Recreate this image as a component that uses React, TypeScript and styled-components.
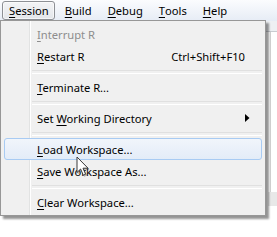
import React from "react";
import styled, { createGlobalStyle } from "styled-components";

const GlobalStyle = createGlobalStyle`
  html, body { margin: 0; padding: 0; background: #ffffff; }
  body { font-family: "Noto Sans", "Open Sans", sans-serif; font-size: 11.2px; color: #000; }
  * { box-sizing: border-box; }
`;

const Screen = styled.div`
  position: relative;
  width: 277px;
  height: 237px;
  overflow: hidden;
  background: #ffffff;
  display: flex;
  flex-direction: column;
`;

const MenuBar = styled.div`
  height: 21px;
  flex: none;
  display: flex;
  align-items: stretch;
  padding: 1px 0 1px 2px;
  background: linear-gradient(#fbfcfe, #e6ecf5);
`;

const MenuTitle = styled.div<{ $open?: boolean }>`
  display: flex;
  align-items: center;
  padding: 0 ${(p) => (p.$open ? "5px 0 6px" : "7px")};
  margin-right: ${(p) => (p.$open ? "2px" : "0")};
  border: 1px solid ${(p) => (p.$open ? "#8d9095" : "transparent")};
  border-radius: 3px;
  background: ${(p) => (p.$open ? "linear-gradient(#f3f4f6, #e3e6ea)" : "transparent")};
  box-shadow: ${(p) => (p.$open ? "inset 0 0 0 1px rgba(255,255,255,0.6)" : "none")};
  line-height: 1;
  white-space: nowrap;
`;

const Key = styled.span`
  text-decoration: underline;
  text-underline-offset: 2px;
  text-decoration-thickness: 1px;
`;

const Backdrop = styled.div`
  flex: 1;
  display: flex;
  flex-direction: column;
`;

const ToolStrip = styled.div`
  height: 11px;
  flex: none;
  background: #eef0f3;
  border-bottom: 1px solid #c9ccd1;
`;

const PaneArea = styled.div`
  flex: 1;
  display: flex;
  flex-direction: column;
  align-items: flex-end;
`;

const PaneEdge = styled.div`
  width: 4px;
  height: 160px;
  margin-right: 3px;
  border-left: 1px solid #d4d4d4;
`;

const PaneBlock = styled.div`
  width: 9px;
  height: 14px;
  background: #e8e8e8;
`;

const Menu = styled.div`
  position: absolute;
  left: 0;
  top: 20px;
  width: 266px;
  padding: 2px;
  border: 1px solid #979797;
  background-color: #f0f0f0;
  background-image: linear-gradient(
    to right,
    transparent 28px,
    #e2e3e3 28px,
    #e2e3e3 29px,
    #ffffff 29px,
    #ffffff 30px,
    transparent 30px
  );
  box-shadow: 3px 3px 2px rgba(0, 0, 0, 0.42);
  display: flex;
  flex-direction: column;
`;

const Item = styled.div<{ $hot?: boolean; $disabled?: boolean }>`
  height: 22px;
  display: flex;
  align-items: center;
  margin: 0 1px;
  padding: 0 6px 0 32px;
  border: 1px solid ${(p) => (p.$hot ? "#a8cbf3" : "transparent")};
  border-radius: 3px;
  background: ${(p) => (p.$hot ? "linear-gradient(#f1f5fb, #e3ecf8)" : "transparent")};
  color: ${(p) => (p.$disabled ? "#8d8d8d" : "#000")};
  white-space: nowrap;
`;

const Label = styled.span`
  flex: 1;
`;

const Shortcut = styled.span`
  margin-right: 10px;
`;

const ArrowCell = styled.span`
  width: 10px;
  display: flex;
  justify-content: flex-start;
  align-items: center;
`;

const Separator = styled.div`
  height: 9px;
  display: flex;
  align-items: center;
  padding-left: 29px;
  padding-right: 1px;
  &::after {
    content: "";
    flex: 1;
    height: 2px;
    border-top: 1px solid #e0e0e0;
    border-bottom: 1px solid #ffffff;
  }
`;

const Cursor = styled.svg`
  position: absolute;
  left: 76px;
  top: 156px;
  width: 14px;
  height: 21px;
  filter: drop-shadow(1px 1px 0.6px rgba(0, 0, 0, 0.25));
`;

const SubArrow = () => (
  <svg width="5" height="8" viewBox="0 0 5 8">
    <path d="M0 0 L4.5 4 L0 8 Z" fill="#000" />
  </svg>
);

export default function App() {
  return (
    <>
      <GlobalStyle />
      <Screen>
        <MenuBar>
          <MenuTitle $open>
            <Key>S</Key>ession
          </MenuTitle>
          <MenuTitle>
            <Key>B</Key>uild
          </MenuTitle>
          <MenuTitle>
            <Key>D</Key>ebug
          </MenuTitle>
          <MenuTitle>
            <Key>T</Key>ools
          </MenuTitle>
          <MenuTitle>
            <Key>H</Key>elp
          </MenuTitle>
        </MenuBar>
        <Backdrop>
          <ToolStrip />
          <PaneArea>
            <PaneEdge />
            <PaneBlock />
          </PaneArea>
        </Backdrop>

        <Menu>
          <Item $disabled>
            <Label>
              <Key>I</Key>nterrupt R
            </Label>
          </Item>
          <Item>
            <Label>
              <Key>R</Key>estart R
            </Label>
            <Shortcut>Ctrl+Shift+F10</Shortcut>
          </Item>
          <Separator />
          <Item>
            <Label>
              <Key>T</Key>erminate R...
            </Label>
          </Item>
          <Separator />
          <Item>
            <Label>
              Set <Key>W</Key>orking Directory
            </Label>
            <ArrowCell>
              <SubArrow />
            </ArrowCell>
          </Item>
          <Separator />
          <Item $hot>
            <Label>
              <Key>L</Key>oad Workspace...
            </Label>
          </Item>
          <Item>
            <Label>
              <Key>S</Key>ave Workspace As...
            </Label>
          </Item>
          <Separator />
          <Item>
            <Label>
              <Key>C</Key>lear Workspace...
            </Label>
          </Item>
        </Menu>

        <Cursor viewBox="0 0 14 21">
          <path
            d="M1 1 L1 16.5 L4.6 13 L7.3 19.2 L9.6 18.2 L7 12.2 L12 12.2 Z"
            fill="#ffffff"
            stroke="#3a3a3a"
            strokeWidth="1"
            strokeLinejoin="round"
          />
        </Cursor>
      </Screen>
    </>
  );
}
